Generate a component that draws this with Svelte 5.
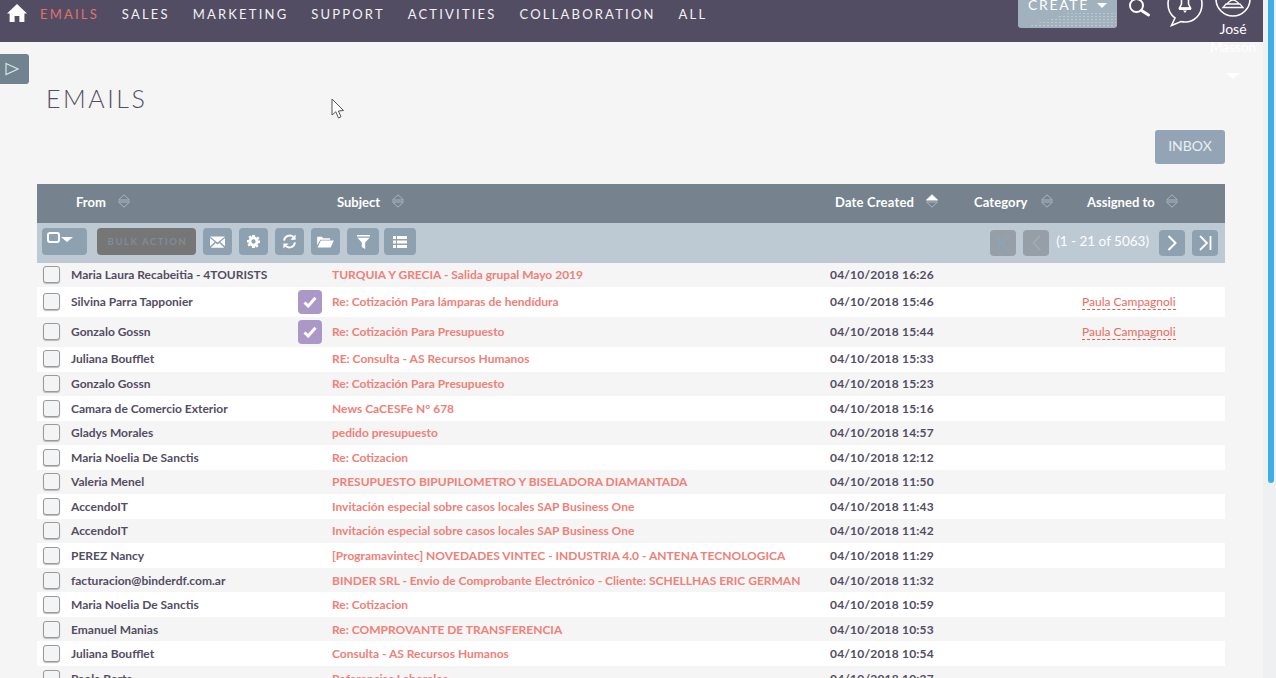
<script>
  const rows = [
    ['Maria Laura Recabeitia - 4TOURISTS', 'TURQUIA Y GRECIA - Salida grupal Mayo 2019', '04/10/2018 16:26', '', false, 24, true],
    ['Silvina Parra Tapponier', 'Re: Cotización Para lámparas de hendídura', '04/10/2018 15:46', 'Paula Campagnoli', true, 30, true],
    ['Gonzalo Gossn', 'Re: Cotización Para Presupuesto', '04/10/2018 15:44', 'Paula Campagnoli', true, 30, true],
    ['Juliana Boufflet', 'RE: Consulta - AS Recursos Humanos', '04/10/2018 15:33', '', false, 25, true],
    ['Gonzalo Gossn', 'Re: Cotización Para Presupuesto', '04/10/2018 15:23', '', false, 24, true],
    ['Camara de Comercio Exterior', 'News CaCESFe N° 678', '04/10/2018 15:16', '', false, 25, false],
    ['Gladys Morales', 'pedido presupuesto', '04/10/2018 14:57', '', false, 24, true],
    ['Maria Noelia De Sanctis', 'Re: Cotizacion', '04/10/2018 12:12', '', false, 25, false],
    ['Valeria Menel', 'PRESUPUESTO BIPUPILOMETRO Y BISELADORA DIAMANTADA', '04/10/2018 11:50', '', false, 24, true],
    ['AccendoIT', 'Invitación especial sobre casos locales SAP Business One', '04/10/2018 11:43', '', false, 25, false],
    ['AccendoIT', 'Invitación especial sobre casos locales SAP Business One', '04/10/2018 11:42', '', false, 24, true],
    ['PEREZ Nancy', '[Programavintec] NOVEDADES VINTEC - INDUSTRIA 4.0 - ANTENA TECNOLOGICA', '04/10/2018 11:29', '', false, 25, false],
    ['facturacion@binderdf.com.ar', 'BINDER SRL - Envio de Comprobante Electrónico - Cliente: SCHELLHAS ERIC GERMAN', '04/10/2018 11:32', '', false, 24, false],
    ['Maria Noelia De Sanctis', 'Re: Cotizacion', '04/10/2018 10:59', '', false, 25, false],
    ['Emanuel Manias', 'Re: COMPROVANTE DE TRANSFERENCIA', '04/10/2018 10:53', '', false, 24, false],
    ['Juliana Boufflet', 'Consulta - AS Recursos Humanos', '04/10/2018 10:54', '', false, 25, false],
    ['Paola Berta', 'Referencias Laborales', '04/10/2018 10:37', '', false, 24, false]
  ];
  const nav = ['EMAILS', 'SALES', 'MARKETING', 'SUPPORT', 'ACTIVITIES', 'COLLABORATION', 'ALL'];
  const cols = [['From', 'c-from', false], ['Subject', 'c-subj', false], ['Date Created', 'c-date', true], ['Category', 'c-cat', false], ['Assigned to', 'c-asg', false]];
</script>

<div class="page">
  <div class="main">
    <header class="topbar">
      <svg class="home" viewBox="0 0 20 18" width="20" height="18"><path fill="#fff" d="M10 0 L20 9.4 L17.4 9.4 L17.4 18 L12.4 18 L12.4 12 L7.6 12 L7.6 18 L2.6 18 L2.6 9.4 L0 9.4 Z"/></svg>
      <nav class="nav">
        {#each nav as n, i}
          <span class:active={i === 0}>{n}</span>
        {/each}
      </nav>
      <div class="right">
        <div class="create">CREATE<i class="caret"></i></div>
        <svg class="search" viewBox="0 0 22 18" width="22" height="18"><circle cx="7.5" cy="5.5" r="6.5" fill="none" stroke="#fff" stroke-width="2"/><path d="M12.5 10.5 L19.5 15" stroke="#fff" stroke-width="3" stroke-linecap="round"/></svg>
        <svg class="bell" viewBox="0 0 38 27" width="38" height="27"><path fill="none" stroke="#fff" stroke-width="1.6" d="M19 -12 C9 -12 2 -5 2 4 C2 10 5 15 9 18 L5.500 25.500 L15 21.500 C16.500 22 18 22 19 22 C29 22 36 14 36 4 C36 -5 29 -12 19 -12 Z"/><path fill="none" stroke="#fff" stroke-width="1.600" d="M15.500 -1 L15.500 4 L13.500 8 L24.500 8 L22.500 4 L22.500 -1"/><path fill="#fff" d="M13 7.500 L25 7.500 L25 10 L13 10 Z M17 10.500 L21 10.500 L19 13 Z"/></svg>
        <div class="user">
          <svg class="avatar" viewBox="0 0 36 17" width="36" height="17"><circle cx="18" cy="-1" r="17" fill="none" stroke="#fff" stroke-width="1.6"/><path d="M8 7.500 L28 7.500 L25 4 L11 4 Z M12 4 Q18 -4 24 4" fill="none" stroke="#fff" stroke-width="1.300"/></svg>
          <div class="uname">José</div>
          <div class="uname last">Masson</div>
          <i class="ucaret"></i>
        </div>
      </div>
    </header>

    <button class="side" aria-label="Open sidebar"><svg viewBox="0 0 14 14" width="14" height="14"><path d="M1 1.500 L13 7 L1 12.500 Z" fill="none" stroke="#d5e6ea" stroke-width="1.200"/></svg></button>

    <svg class="pointer" viewBox="0 0 14 22" width="14" height="22"><path d="M1 1 L1 17 L4.800 13.800 L7.500 20 L10 18.800 L7.400 13 L12.500 12.500 Z" fill="#fff" stroke="#555" stroke-width="1"/></svg>

    <div class="content">
      <h1>EMAILS</h1>
      <div class="actions"><button class="inbox">INBOX</button></div>

      <div class="thead">
        {#each cols as c}
          <div class="th {c[1]}">
            <span>{c[0]}</span>
            <svg class="sort" viewBox="0 0 12 14" width="12" height="14">
              <path d="M6 .8 L11.500 6 L.5 6 Z" fill={c[2] ? '#fff' : 'none'} stroke={c[2] ? '#fff' : '#a9b6bf'} stroke-width="1"/>
              <path d="M.5 8 L11.500 8 L6 13.200 Z" fill="none" stroke="#a9b6bf" stroke-width="1"/>
            </svg>
          </div>
        {/each}
      </div>

      <div class="toolbar">
        <div class="tb-left">
          <div class="btn selall"><i class="sq"></i><i class="tcaret"></i></div>
          <div class="btn bulk">BULK ACTION</div>
          <div class="btn ic w29"><svg viewBox="0 0 16 12" width="15" height="12"><path fill="#fff" d="M0 0 L16 0 L8 6.500 Z M0 1.800 L5 6 L0 10.500 Z M16 1.800 L11 6 L16 10.500 Z M.8 12 L6 7 L8 8.600 L10 7 L15.200 12 Z"/></svg></div>
          <div class="btn ic w29"><svg viewBox="0 0 14 14" width="13" height="13"><path fill="#fff" fill-rule="evenodd" d="M5.600 0 H8.400 L8.800 2 L10.400 2.700 L12.100 1.500 L13.500 3.900 L12 5.200 L12.200 6 H14 V8.500 L12 8.900 L11.300 10.400 L12.500 12.100 L10.500 13.500 L8.900 12 L8.400 14 H5.600 L5.200 12 L3.600 11.300 L1.900 12.500 L.5 10.100 L2 8.800 L1.800 8 H0 V5.500 L2 5.100 L2.700 3.600 L1.500 1.900 L3.500 .5 L5.100 2 Z M7 4.700 A2.300 2.300 0 1 0 7 9.300 A2.300 2.300 0 1 0 7 4.700 Z"/></svg></div>
          <div class="btn ic w29"><svg viewBox="0 0 16 16" width="15" height="15"><path fill="none" stroke="#fff" stroke-width="2" d="M2.200 7 A6 6 0 0 1 12.500 3.500 M13.800 9 A6 6 0 0 1 3.500 12.500"/><path fill="#fff" d="M14.500 .5 V6 H9 Z M1.500 15.500 V10 H7 Z"/></svg></div>
          <div class="btn ic w29"><svg viewBox="0 0 18 14" width="17" height="13"><path fill="#fff" d="M0 2 H5 L6.500 3.500 H14 V5 H3.500 L0 11 Z M4 6 H18 L14.500 13.500 H0.500 Z"/></svg></div>
          <div class="btn ic w32"><svg viewBox="0 0 14 15" width="13" height="14"><path fill="#fff" d="M0 0 H14 V1.500 H0 Z M.5 3 H13.500 L8.800 8 V15 L5.200 13 V8 Z"/></svg></div>
          <div class="btn ic w32 tight"><svg viewBox="0 0 14 12" width="14" height="12"><path fill="#fff" d="M0 0 H3 V3 H0 Z M4 0 H14 V3 H4 Z M0 4.500 H3 V7.500 H0 Z M4 4.500 H14 V7.500 H4 Z M0 9 H3 V12 H0 Z M4 9 H14 V12 H4 Z"/></svg></div>
        </div>
        <div class="tb-right">
          <div class="pg off"><svg viewBox="0 0 12 16" width="12" height="16"><path d="M1.500 1 V15 M11 1 L4 8 L11 15" fill="none" stroke="#8ba6bc" stroke-width="1.500"/></svg></div>
          <div class="pg off"><svg viewBox="0 0 9 16" width="9" height="16"><path d="M8 1 L1.500 8 L8 15" fill="none" stroke="#a3adb4" stroke-width="1.300"/></svg></div>
          <span class="count">(1 - 21 of 5063)</span>
          <div class="pg on"><svg viewBox="0 0 10 16" width="10" height="16"><path d="M1.500 1 L8.500 8 L1.500 15" fill="none" stroke="#fff" stroke-width="2"/></svg></div>
          <div class="pg on"><svg viewBox="0 0 13 16" width="13" height="16"><path d="M1 1 L8 8 L1 15 M11.500 1 V15" fill="none" stroke="#fff" stroke-width="1.800"/></svg></div>
        </div>
      </div>

      <div class="list">
        {#each rows as r, i}
          <div class="row" class:odd={i % 2 === 1} class:up={r[6]} style="height:{r[5]}px">
            <i class="cb"></i>
            <span class="from">{r[0]}</span>
            <span class="flag">
              {#if r[4]}
                <span class="check"><svg viewBox="0 0 14 12" width="14" height="12"><path d="M1.500 6.500 L5.200 10 L12.500 1.800" fill="none" stroke="#fff" stroke-width="3"/></svg></span>
              {/if}
            </span>
            <span class="subj">{r[1]}</span>
            <span class="date">{r[2]}</span>
            <span class="asg">{#if r[3]}<span>{r[3]}</span>{/if}</span>
          </div>
        {/each}
      </div>
    </div>
  </div>
  <div class="track"><div class="thumb"></div></div>
</div>

<style>
  :global(body) { margin: 0; overflow: hidden; background: #f5f5f5; }
  .page { display: flex; height: 678px; overflow: hidden; font-family: Lato, "Liberation Sans", sans-serif; position: relative; }
  .main { width: 1263px; flex: none; position: relative; background: #f5f5f5; }
  .track { width: 13px; flex: none; background: #eef0f2; padding-left: 5px; box-sizing: border-box; }
  .thumb { width: 6px; height: 483px; background: #3daee9; border-radius: 0 0 3px 3px; }

  .topbar { height: 42px; background: #534d64; display: flex; align-items: flex-start; position: relative; overflow: visible; }
  .home { margin: 4px 0 0 7px; flex: none; }
  .nav { display: flex; gap: 22.900px; margin-left: 13px; padding-top: 6px; font-size: 13px; letter-spacing: 2.200px; line-height: 16px; color: #f2f2f2; }
  .nav .active { color: #e2706a; }
  .right { position: absolute; left: 1018px; top: 0; display: flex; align-items: flex-start; }
  .create { width: 99px; height: 28px; box-sizing: border-box; border-radius: 0 0 3px 3px; padding: 0 0 0 10px; background: #a1b1bd; color: #fff; font-size: 14px; letter-spacing: 1.650px; line-height: 10px; display: flex; align-items: flex-start; overflow: hidden; position: relative; }
  .create::after { content: ""; position: absolute; left: 8px; right: 1px; top: 12px; bottom: 1px; background-image: radial-gradient(circle, rgba(255, 255, 255, .3) .6px, transparent 1px); background-size: 4px 3px; clip-path: polygon(0 100%, 45% 10%, 100% 0, 100% 100%); }
  .caret { width: 0; height: 0; margin: 3px 0 0 8px; border: 5px solid transparent; border-top: 5px solid #fff; border-bottom: 0; }
  .search { margin: 0 0 0 12px; flex: none; }
  .bell { margin-left: 15px; flex: none; }
  .user { width: 60px; margin-left: -1px; display: flex; flex-direction: column; align-items: center; color: #fff; font-size: 14px; line-height: 18px; }
  .avatar { flex: none; margin-bottom: 3px; }
  .uname { height: 18px; }
  .uname.last { color: #fff; font-size: 13.500px; }
  .ucaret { width: 0; height: 0; margin-top: 17px; border: 7px solid transparent; border-top: 6px solid #fff; border-bottom: 0; }

  .side { position: absolute; left: 0; top: 54px; width: 29px; height: 30px; padding: 0 0 0 5px; background: #71838e; border: 0; border-radius: 0 3px 3px 0; display: flex; align-items: center; }
  .pointer { position: absolute; left: 331px; top: 98px; }

  .content { padding: 0 38px 0 37px; }
  h1 { margin: 42px 0 0 9px; height: 28px; font-weight: 300; font-size: 25px; line-height: 28px; letter-spacing: 2.550px; color: #534d64; }
  .actions { display: flex; justify-content: flex-end; margin-top: 18px; height: 54px; }
  .inbox { width: 70px; height: 34px; padding: 0 0 3px; border: 0; border-radius: 3px; background: #93a5b4; color: #eaf0f3; font: 400 14px Lato, sans-serif; }

  .thead { height: 39px; background: #76838f; position: relative; color: #fff; font-size: 13px; font-weight: 700; }
  .th { position: absolute; top: 0; height: 36px; display: flex; align-items: center; }
  .th .sort { margin-left: 12px; margin-top: -3px; }
  .c-from { left: 39px; }
  .c-subj { left: 300px; }
  .c-date { left: 798px; letter-spacing: .18px; }
  .c-cat { left: 937px; letter-spacing: .1px; }
  .c-cat .sort { margin-left: 13px; }
  .c-asg { left: 1050px; }
  .c-asg .sort { margin-left: 11px; }

  .toolbar { height: 40px; background: #bdc9d3; display: flex; justify-content: space-between; box-sizing: border-box; padding: 5px 7px 0 5px; }
  .tb-left { display: flex; gap: 7px; }
  .btn { height: 27px; background: #8ea1b1; border-radius: 4px; display: flex; align-items: center; justify-content: center; flex: none; }
  .w29 { width: 29px; }
  .w32 { width: 32px; }
  .tight { margin-left: -2px; }
  .selall { width: 45px; margin-right: 3px; justify-content: flex-start; padding-left: 5px; box-sizing: border-box; align-items: flex-start; }
  .sq { width: 9px; height: 7px; border: 2px solid #fff; border-radius: 3px; margin-top: 4px; flex: none; }
  .tcaret { width: 0; height: 0; margin: 9px 0 0 1px; border: 6px solid transparent; border-top: 5px solid #fff; border-bottom: 0; flex: none; }
  .bulk { width: 99px; background: #767676; color: #808c98; font-size: 9.500px; font-weight: 700; letter-spacing: 1.500px; padding-left: 2px; box-sizing: border-box; }
  .tb-right { display: flex; align-items: flex-start; padding-top: 2px; gap: 7px; }
  .pg { width: 26px; height: 26px; border-radius: 4px; display: flex; align-items: center; justify-content: center; background: #8ea1b1; }
  .pg.off { background: #969fa7; }
  .count { color: #fff; font-size: 13.500px; font-weight: 400; line-height: 22px; margin: 0 3px 0 0; }

  .row { display: flex; align-items: center; font-size: 12px; font-weight: 700; color: #534d64; box-sizing: border-box; }
  .row.odd { background: #fff; }
  .row.up { padding-bottom: 2px; }
  .row.up .flag { margin-top: 2px; }
  .cb { width: 15px; height: 15px; margin-left: 6px; border: 1px solid #9a9a9a; border-radius: 3px; background: #f3f4f6; box-shadow: 0 1px 1px #bbb; flex: none; }
  .from { width: 227px; margin-left: 11px; white-space: nowrap; flex: none; }
  .flag { width: 24px; margin-right: 10px; flex: none; display: flex; }
  .check { width: 24px; height: 24px; background: #ab98c9; border-radius: 4px; display: flex; align-items: center; justify-content: center; }
  .subj { width: 498px; flex: none; color: #f08078; white-space: nowrap; overflow: hidden; }
  .date { width: 252px; flex: none; letter-spacing: .2px; white-space: nowrap; }
  .asg { flex: none; color: #ea6a60; font-weight: 400; font-size: 12px; white-space: nowrap; }
  .asg span { border-bottom: 1px dashed #ea5a50; }
</style>
